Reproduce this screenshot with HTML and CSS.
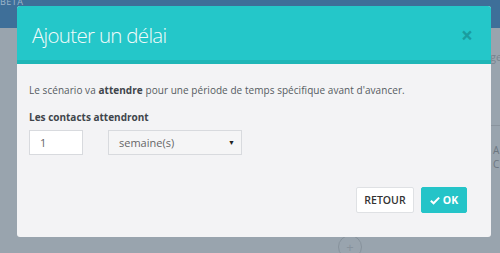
FILE: index.html
```html
<!DOCTYPE html>
<html lang="fr">
<head>
<meta charset="utf-8">
<title>Ajouter un délai</title>
<link rel="stylesheet" href="styles.css">
</head>
<body>
<div class="app">
  <div class="topbar"><span class="beta">BETA</span></div>
  <div class="canvas">
    <div class="node node-right">
      <div class="node-head">ge</div>
      <div class="node-body">A<br>C</div>
    </div>
    <div class="add-btn">+</div>
  </div>
</div>
<div class="modal">
  <div class="modal-header">
    <h1 class="modal-title">Ajouter un délai</h1>
    <span class="modal-close">&times;</span>
  </div>
  <div class="modal-body">
    <p class="intro">Le scénario va <strong>attendre</strong> pour une période de temps spécifique avant d'avancer.</p>
    <label class="field-label">Les contacts attendront</label>
    <div class="field-row">
      <div class="input">1</div>
      <div class="select"><span>semaine(s)</span><span class="caret">&#9660;</span></div>
    </div>
  </div>
  <div class="modal-footer">
    <button class="btn btn-default">RETOUR</button>
    <button class="btn btn-primary"><svg class="check" viewBox="0 0 12 10" width="10" height="9"><path d="M1 5.2 L4.3 8.3 L11 1.6" fill="none" stroke="#fff" stroke-width="2.4"/></svg>OK</button>
  </div>
</div>
</body>
</html>
```
FILE: styles.css
```css
html, body {
  margin: 0;
  padding: 0;
}
body {
  width: 500px;
  height: 253px;
  overflow: hidden;
  background: #99a4ae;
  font-family: "Open Sans", "Liberation Sans", sans-serif;
  position: relative;
}
.app {
  display: flex;
  flex-direction: column;
  height: 253px;
}
.topbar {
  height: 28px;
  background: #3e6f99;
  position: relative;
  overflow: hidden;
}
.beta {
  position: absolute;
  left: 0;
  top: -5px;
  font-size: 9px;
  color: #9fb6cc;
  letter-spacing: 0.5px;
}
.canvas {
  flex: 1;
  position: relative;
  background: #99a4ae;
  overflow: hidden;
}
.node {
  position: absolute;
}
.node-right {
  left: 484px;
  top: 12px;
  width: 40px;
}
.node-head {
  height: 86px;
  padding-left: 6px;
  padding-top: 9px;
  box-sizing: border-box;
  color: #7a848e;
  font-size: 11px;
  border-bottom: 1px solid #8a949e;
}
.node-body {
  padding-left: 9px;
  padding-top: 17px;
  color: #6c7680;
  font-size: 10px;
  line-height: 14px;
}
.add-btn {
  position: absolute;
  left: 338px;
  top: 207px;
  width: 22px;
  height: 22px;
  border: 1px solid #87929c;
  border-radius: 50%;
  color: #87929c;
  font-size: 13px;
  line-height: 22px;
  text-align: center;
}
.modal {
  position: absolute;
  left: 17px;
  top: 6px;
  width: 474px;
  height: 231px;
  background: #f3f3f5;
  border-radius: 3px;
  overflow: hidden;
  display: flex;
  flex-direction: column;
}
.modal-header {
  height: 54px;
  background: #24c7c9;
  border-bottom: 4px solid #1fb6b7;
  display: flex;
  align-items: center;
  justify-content: space-between;
  padding: 0 18px 0 15px;
}
.modal-title {
  margin: 0;
  font-weight: 300;
  font-size: 20.5px;
  letter-spacing: -0.7px;
  color: #f2fbfb;
  padding-top: 4px;
}
.modal-close {
  color: #1a9d9f;
  font-size: 21px;
  font-weight: 700;
  padding-top: 3px;
}
.modal-body {
  padding: 19px 12px 0 12px;
  flex: 1;
  color: #555b61;
}
.intro {
  margin: 0 0 12px;
  font-size: 10px;
  letter-spacing: 0.05px;
  line-height: 15px;
}
.intro strong {
  font-weight: 700;
  color: #3f454b;
}
.field-label {
  display: block;
  font-size: 10px;
  font-weight: 700;
  color: #3f454b;
  line-height: 15px;
  margin-bottom: 5px;
}
.field-row {
  display: flex;
  gap: 25px;
}
.input {
  width: 54px;
  height: 25px;
  box-sizing: border-box;
  background: #fff;
  border: 1px solid #d8dade;
  font-size: 11px;
  color: #666;
  padding-left: 10px;
  line-height: 23px;
}
.select {
  width: 134px;
  height: 25px;
  box-sizing: border-box;
  background: #f5f5f6;
  border: 1px solid #d8dade;
  font-size: 11px;
  color: #666;
  padding: 0 6px 0 10px;
  line-height: 23px;
  display: flex;
  justify-content: space-between;
}
.caret {
  font-size: 7px;
  color: #222;
}
.modal-footer {
  display: flex;
  justify-content: flex-end;
  gap: 7px;
  padding: 0 24px 24px 0;
}
.btn {
  height: 26px;
  box-sizing: border-box;
  font-family: "Open Sans", "Liberation Sans", sans-serif;
  font-size: 10.5px;
  border-radius: 2px;
  padding: 0;
  display: flex;
  align-items: center;
  justify-content: center;
}
.btn-default {
  width: 58px;
  background: #fff;
  border: 1px solid #dfe1e4;
  color: #333;
  font-weight: 600;
}
.btn-primary {
  width: 46px;
  background: #24c4c8;
  border: 1px solid #24c4c8;
  color: #fff;
  font-weight: 700;
  gap: 3px;
}
```
